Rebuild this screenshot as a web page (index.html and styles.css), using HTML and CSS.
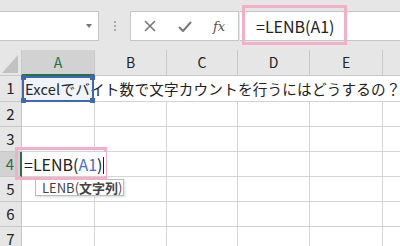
FILE: index.html
```html
<!DOCTYPE html>
<html>
<head>
    <meta charset="UTF-8">
    <title>LENB</title>
    <link rel="stylesheet" href="styles.css">
</head>
<body>
<div class="bar">
    <div class="namebox"><span class="caret"></span></div>
    <div class="grip"><i></i><i></i><i></i></div>
    <div class="fbtns">
        <svg width="12" height="12" viewBox="0 0 12 12"><path d="M1 1L11 11M11 1L1 11" stroke="#777" stroke-width="1.6" fill="none"/></svg>
        <svg width="14" height="11" viewBox="0 0 14 11"><path d="M1 6L5 10L13 1" stroke="#777" stroke-width="2" fill="none"/></svg>
        <span class="fx">fx</span>
    </div>
    <div class="fbar">=LENB(A1)</div>
    <div class="mark mark-fbar"></div>
</div>

<div class="sheet">
    <!-- 見出し -->
    <div class="corner"></div>
    <div class="colhead on">A</div>
    <div class="colhead">B</div>
    <div class="colhead">C</div>
    <div class="colhead">D</div>
    <div class="colhead">E</div>
    <div class="colhead last"></div>

    <!-- 1行目 -->
    <div class="rowhead">1</div>
    <div class="cell wide">Excelでバイト数で文字カウントを行うにはどうするの？</div>

    <div class="rowhead">2</div>
    <div class="cell"></div><div class="cell"></div><div class="cell"></div><div class="cell"></div><div class="cell"></div><div class="cell last"></div>

    <div class="rowhead">3</div>
    <div class="cell"></div><div class="cell"></div><div class="cell"></div><div class="cell"></div><div class="cell"></div><div class="cell last"></div>

    <!-- 編集中のセル -->
    <div class="rowhead on">4</div>
    <div class="cell edit"><span class="edittext">=LENB(<span class="ref">A1</span>)<span class="cursor"></span></span></div>
    <div class="cell"></div><div class="cell"></div><div class="cell"></div><div class="cell"></div><div class="cell last"></div>

    <div class="rowhead">5</div>
    <div class="cell"></div><div class="cell"></div><div class="cell"></div><div class="cell"></div><div class="cell"></div><div class="cell last"></div>

    <div class="rowhead">6</div>
    <div class="cell"></div><div class="cell"></div><div class="cell"></div><div class="cell"></div><div class="cell"></div><div class="cell last"></div>

    <div class="rowhead">7</div>
    <div class="cell"></div><div class="cell"></div><div class="cell"></div><div class="cell"></div><div class="cell"></div><div class="cell last"></div>

    <div class="refbox"><i class="h tl"></i><i class="h tr"></i><i class="h bl"></i><i class="h br"></i></div>
    <div class="tip">LENB(<b>文字列</b>)</div>
    <div class="mark mark-cell"></div>
</div>
</body>
</html>
```

FILE: styles.css
```css
*{
    box-sizing:border-box;
}

body{
    margin:0;
    width:400px;
    height:246px;
    overflow:hidden;
    background:#fff;
    font-family:"Noto Sans CJK JP","Noto Sans",sans-serif;
    color:#222;
}

/* 数式バー */
.bar{
    position:relative;
    height:50px;
    background:#e6e6e6;
    display:flex;
    align-items:flex-start;
    padding-top:11px;
}

.namebox{
    width:99px;
    height:30px;
    background:#fff;
    border:1px solid #c6c6c6;
    border-left:none;
    position:relative;
}

.caret{
    position:absolute;
    left:86px;
    top:12px;
    border-left:3px solid transparent;
    border-right:3px solid transparent;
    border-top:4px solid #777;
}

.grip{
    width:31px;
    height:30px;
    display:flex;
    flex-direction:column;
    align-items:center;
    justify-content:center;
    gap:2px;
}

.grip i{
    width:2px;
    height:2px;
    background:#aaa;
}

.fbtns{
    width:109px;
    height:30px;
    background:#fff;
    border:1px solid #c6c6c6;
    display:flex;
    align-items:center;
    padding-left:13px;
    gap:22px;
}

.fx{
    font-family:"DejaVu Serif","Liberation Serif",serif;
    font-style:italic;
    font-size:13px;
    color:#555;
    margin-left:-1px;
}

.fbar{
    flex:1;
    height:30px;
    margin-left:1px;
    background:#fff;
    border-top:1px solid #c6c6c6;
    border-bottom:1px solid #c6c6c6;
    padding-left:16px;
    font-size:16px;
    line-height:28px;
    color:#222;
}

/* 注釈の枠 */
.mark{
    position:absolute;
    border:3px solid #f2b0c8;
}

.mark-fbar{
    left:242px;
    top:5px;
    width:105px;
    height:40px;
}

.mark-cell{
    left:15px;
    top:97px;
    width:92px;
    height:33px;
}

/* シート */
.sheet{
    position:relative;
    display:grid;
    grid-template-columns:22px 73px 72px 71px 72px 73px 1fr;
    grid-template-rows:26px 26px repeat(6,25px);
}

.corner{
    background:#e6e6e6;
    border-right:1px solid #c8c8c8;
    border-bottom:1px solid #c8c8c8;
    position:relative;
}

.corner::after{
    content:"";
    position:absolute;
    right:3px;
    bottom:2px;
    border-left:16px solid transparent;
    border-bottom:18px solid #c2c2c2;
}

.colhead{
    background:#e6e6e6;
    border-right:1px solid #c8c8c8;
    border-bottom:1px solid #c8c8c8;
    text-align:center;
    font-size:14px;
    line-height:25px;
    color:#222;
}

.colhead.on{
    background:#d2d2d2;
    color:#217346;
    border-bottom:2px solid #217346;
}

.colhead.last,
.cell.last{
    border-right:none;
}

.rowhead{
    background:#e6e6e6;
    border-right:1px solid #c8c8c8;
    border-bottom:1px solid #c8c8c8;
    text-align:center;
    font-size:15px;
    line-height:24px;
    color:#222;
}

.rowhead.on{
    background:#d2d2d2;
    color:#217346;
    border-right:2px solid #217346;
}

.cell{
    border-right:1px solid #d4d4d4;
    border-bottom:1px solid #d4d4d4;
}

.wide{
    grid-column:2 / -1;
    border-right:none;
    padding-left:3px;
    font-size:14.6px;
    letter-spacing:0.2px;
    line-height:25px;
    white-space:nowrap;
}

.edit{
    white-space:nowrap;
    font-size:16px;
    line-height:24px;
    padding-left:2px;
}

.edittext{
    position:relative;
    z-index:1;
    background:#fff;
    display:inline-block;
    padding-right:2px;
}

.ref{
    color:#4472c4;
}

.cursor{
    display:inline-block;
    width:1px;
    height:17px;
    background:#222;
    vertical-align:-3px;
}

/* 参照セル A1 */
.refbox{
    position:absolute;
    left:22px;
    top:26px;
    width:72px;
    height:26px;
    border:2px solid #3f68b0;
    background:rgba(68,114,196,0.08);
}

.h{
    position:absolute;
    width:5px;
    height:5px;
    background:#3f68b0;
}

.tl{ left:-3px; top:-3px; }
.tr{ right:-3px; top:-3px; }
.bl{ left:-3px; bottom:-3px; }
.br{ right:-3px; bottom:-3px; }

.tip{
    position:absolute;
    left:35px;
    top:129px;
    height:17px;
    width:89px;
    padding:0 0 0 6px;
    background:#fff;
    border:1px solid #bdbdbd;
    box-shadow:1px 1px 2px rgba(0,0,0,0.15);
    font-size:13px;
    line-height:15px;
    color:#444;
    white-space:nowrap;
}

.tip b{
    font-weight:bold;
}
```
